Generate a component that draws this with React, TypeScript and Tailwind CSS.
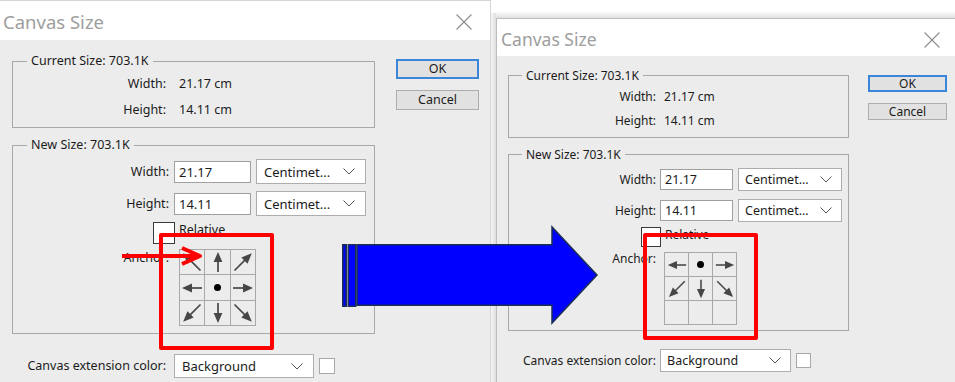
import React from "react";

type Dir = "n" | "ne" | "e" | "se" | "s" | "sw" | "w" | "nw" | "dot" | "";

const angles: Record<string, number> = {
  e: 0,
  se: 45,
  s: 90,
  sw: 135,
  w: 180,
  nw: 225,
  n: 270,
  ne: 315,
};

// one cell of the anchor grid: arrow, dot or empty
const AnchorCell = ({ d, size }: { d: Dir; size: number }) => {
  const diag = d.length === 2;
  return (
    <div className="flex items-center justify-center bg-[#ececec]">
      {d === "dot" ? (
        <div className="h-[7px] w-[7px] rounded-full bg-black" />
      ) : d ? (
        <svg width={size} height={size} viewBox="0 0 24 24" className="overflow-visible">
          <g transform={`rotate(${angles[d]} 12 12)`}>
            <line
              x1={diag ? 0 : 2}
              y1="12"
              x2={diag ? 15 : 13}
              y2="12"
              stroke="#474747"
              strokeWidth="1.7"
            />
            <polygon
              points={diag ? "14,7.6 24.5,12 14,16.4" : "12,7.6 22,12 12,16.4"}
              fill="#474747"
            />
          </g>
        </svg>
      ) : null}
    </div>
  );
};

const Chevron = () => (
  <svg width="12" height="7" viewBox="0 0 12 7">
    <polyline points="0.5,0.5 6,6 11.5,0.5" fill="none" stroke="#555" strokeWidth="1" />
  </svg>
);

const CloseX = () => (
  <svg width="16" height="16" viewBox="0 0 16 16">
    <line x1="0.5" y1="0.5" x2="15.5" y2="15.5" stroke="#8c8c8c" strokeWidth="1.1" />
    <line x1="15.5" y1="0.5" x2="0.5" y2="15.5" stroke="#8c8c8c" strokeWidth="1.1" />
  </svg>
);

const LeftDialog = () => {
  const cells: Dir[] = ["nw", "n", "ne", "w", "dot", "e", "sw", "s", "se"];
  return (
    <div className="flex h-[382px] w-[491px] shrink-0 flex-col border-t border-r border-[#d6d6d6] text-[12.5px] leading-[18px]">
      {/* title bar */}
      <div className="flex h-[39px] items-center justify-between bg-white pl-[3px] pr-[18px] pt-[2px]">
        <span className="text-[18.5px] text-[#9e9e9e]">Canvas Size</span>
        <CloseX />
      </div>

      <div className="flex flex-1 flex-col bg-[#ececec]">
        <div className="flex pl-[12px] pt-[13px]">
          <div className="flex w-[363px] flex-col">
            <fieldset className="h-[75px] border border-[#a8a8a8]">
              <legend className="ml-[14px] px-[4px] leading-[16px]">Current Size: 703.1K</legend>
              <div className="mt-[6px] flex h-[18px] items-center">
                <span className="w-[153px] text-right">Width:</span>
                <span className="ml-[13px]">21.17 cm</span>
              </div>
              <div className="mt-[8px] flex h-[18px] items-center">
                <span className="w-[153px] text-right">Height:</span>
                <span className="ml-[13px]">14.11 cm</span>
              </div>
            </fieldset>

            <fieldset className="mt-[9px] h-[197px] border border-[#a8a8a8]">
              <legend className="ml-[14px] px-[4px] leading-[16px]">New Size: 703.1K</legend>
              <div className="mt-[6px] flex h-[25px] items-center">
                <span className="w-[156px] text-right">Width:</span>
                <div className="ml-[5px] flex h-[22px] w-[77px] items-center border border-[#a0a0a0] bg-white pl-[4px] text-[13px]">
                  21.17
                </div>
                <div className="ml-[5px] flex h-[25px] w-[110px] items-center justify-between border border-[#adadad] bg-white pl-[7px] pr-[10px] text-[13px]">
                  Centimet...
                  <Chevron />
                </div>
              </div>
              <div className="mt-[7px] flex h-[25px] items-center">
                <span className="w-[156px] text-right">Height:</span>
                <div className="ml-[5px] flex h-[22px] w-[77px] items-center border border-[#a0a0a0] bg-white pl-[4px] text-[13px]">
                  14.11
                </div>
                <div className="ml-[5px] flex h-[25px] w-[110px] items-center justify-between border border-[#adadad] bg-white pl-[7px] pr-[10px] text-[13px]">
                  Centimet...
                  <Chevron />
                </div>
              </div>
              <div className="mt-[6px] flex items-start">
                <div className="ml-[140px] h-[22px] w-[22px] border border-[#3a3a3a] bg-white" />
                <span className="ml-[4px] leading-[16px]">Relative</span>
              </div>
              <div className="mt-[5px] flex items-start">
                <span className="w-[156px] text-right">Anchor:</span>
                <div className="ml-[10px] grid grid-cols-[24px_25px_24px] grid-rows-[24px_25px_24px] gap-px border border-[#a9a9a9] bg-[#a9a9a9]">
                  {cells.map((c, i) => (
                    <AnchorCell key={i} d={c} size={24} />
                  ))}
                </div>
              </div>
            </fieldset>
          </div>

          <div className="ml-[21px] mt-[6px] flex flex-col">
            <button className="h-[20px] w-[83px] border-2 border-[#3c86d9] bg-[#e1e1e1] leading-[16px]">OK</button>
            <button className="mt-[11px] h-[20px] w-[83px] border border-[#adadad] bg-[#e1e1e1] leading-[18px]">
              Cancel
            </button>
          </div>
        </div>

        <div className="mt-[20px] flex h-[24px] items-center">
          <span className="w-[166px] text-right">Canvas extension color:</span>
          <div className="ml-[8px] flex h-[24px] w-[140px] items-center justify-between border border-[#adadad] bg-white pl-[7px] pr-[10px] text-[13px]">
            Background
            <Chevron />
          </div>
          <div className="ml-[5px] h-[16px] w-[16px] border border-[#a8a8a8] bg-white" />
        </div>
      </div>
    </div>
  );
};

const RightDialog = () => {
  const cells: Dir[] = ["w", "dot", "e", "sw", "s", "se", "", "", ""];
  return (
    <div className="flex flex-1 flex-col">
      <div className="h-[18px] bg-gradient-to-b from-white from-60% to-[#e2e2e2]" />
      <div className="flex flex-1 flex-col border-l border-t border-[#bdbdbd] text-[12px] leading-[17px]">
        {/* title bar */}
        <div className="flex h-[37px] items-center justify-between bg-white pl-[4px] pr-[15px] pt-[4px]">
          <span className="text-[17.5px] text-[#9e9e9e]">Canvas Size</span>
          <CloseX />
        </div>

        <div className="flex flex-1 flex-col bg-[#ececec]">
          <div className="flex pl-[11px] pt-[12px]">
            <div className="flex w-[341px] flex-col">
              <fieldset className="h-[70px] border border-[#a8a8a8]">
                <legend className="ml-[13px] px-[4px] leading-[15px]">Current Size: 703.1K</legend>
                <div className="mt-[5px] flex h-[17px] items-center">
                  <span className="w-[147px] text-right">Width:</span>
                  <span className="ml-[8px]">21.17 cm</span>
                </div>
                <div className="mt-[7px] flex h-[17px] items-center">
                  <span className="w-[147px] text-right">Height:</span>
                  <span className="ml-[8px]">14.11 cm</span>
                </div>
              </fieldset>

              <fieldset className="mt-[9px] h-[184px] border border-[#a8a8a8]">
                <legend className="ml-[13px] px-[4px] leading-[15px]">New Size: 703.1K</legend>
                <div className="mt-[6px] flex h-[23px] items-center">
                  <span className="w-[147px] text-right">Width:</span>
                  <div className="ml-[4px] flex h-[21px] w-[73px] items-center border border-[#a0a0a0] bg-white pl-[4px] text-[12.5px]">
                    21.17
                  </div>
                  <div className="ml-[5px] flex h-[23px] w-[104px] items-center justify-between border border-[#adadad] bg-white pl-[6px] pr-[9px] text-[12.5px]">
                    Centimet...
                    <Chevron />
                  </div>
                </div>
                <div className="mt-[8px] flex h-[23px] items-center">
                  <span className="w-[147px] text-right">Height:</span>
                  <div className="ml-[4px] flex h-[21px] w-[73px] items-center border border-[#a0a0a0] bg-white pl-[4px] text-[12.5px]">
                    14.11
                  </div>
                  <div className="ml-[5px] flex h-[23px] w-[104px] items-center justify-between border border-[#adadad] bg-white pl-[6px] pr-[9px] text-[12.5px]">
                    Centimet...
                    <Chevron />
                  </div>
                </div>
                <div className="mt-[5px] flex items-start">
                  <div className="ml-[132px] h-[20px] w-[20px] border border-[#3a3a3a] bg-white" />
                  <span className="ml-[4px] leading-[15px]">Relative</span>
                </div>
                <div className="mt-[5px] flex items-start">
                  <span className="w-[147px] text-right leading-[14px]">Anchor:</span>
                  <div className="ml-[8px] grid grid-cols-[23px_23px_23px] grid-rows-[23px_23px_23px] gap-px border border-[#a9a9a9] bg-[#a9a9a9]">
                    {cells.map((c, i) => (
                      <AnchorCell key={i} d={c} size={22} />
                    ))}
                  </div>
                </div>
              </fieldset>
            </div>

            <div className="ml-[19px] mt-[7px] flex flex-col">
              <button className="h-[17px] w-[79px] border-2 border-[#3c86d9] bg-[#e1e1e1] leading-[13px]">OK</button>
              <button className="mt-[11px] h-[17px] w-[79px] border border-[#adadad] bg-[#e1e1e1] leading-[15px]">
                Cancel
              </button>
            </div>
          </div>

          <div className="mt-[18px] flex h-[23px] items-center">
            <span className="w-[159px] text-right">Canvas extension color:</span>
            <div className="ml-[4px] flex h-[23px] w-[131px] items-center justify-between border border-[#adadad] bg-white pl-[6px] pr-[9px] text-[12.5px]">
              Background
              <Chevron />
            </div>
            <div className="ml-[5px] h-[15px] w-[15px] border border-[#a8a8a8] bg-white" />
          </div>
        </div>
      </div>
    </div>
  );
};

export default function App() {
  return (
    <div className="relative flex h-[382px] w-[955px] overflow-hidden bg-white font-['Noto_Sans',sans-serif] text-[#1b1b1b]">
      <LeftDialog />
      <div className="flex w-[5px] flex-col">
        <div className="h-[13px] bg-white" />
        <div className="flex-1 bg-gradient-to-r from-[#f6f6f6] to-[#dedede]" />
      </div>
      <RightDialog />

      {/* red highlight boxes */}
      <div className="absolute left-[159px] top-[233px] h-[117px] w-[115px] rounded-[2px] border-4 border-[#ff0000]" />
      <div className="absolute left-[643px] top-[233px] h-[107px] w-[115px] rounded-[2px] border-4 border-[#ff0000]" />

      {/* red pointer arrow */}
      <svg className="absolute left-[120px] top-[244px]" width="86" height="24" viewBox="0 0 86 24">
        <line x1="2" y1="12" x2="79" y2="12" stroke="#ff0000" strokeWidth="4" />
        <polyline points="62,4 80,12 62,20" fill="none" stroke="#ff0000" strokeWidth="4" strokeLinejoin="round" />
      </svg>

      {/* blue block arrow */}
      <svg className="absolute left-[340px] top-[224px]" width="260" height="102" viewBox="0 0 260 102">
        <rect x="2.75" y="20.75" width="3.5" height="61.5" fill="#0000ff" stroke="#1b2f55" strokeWidth="1.5" />
        <rect x="8.25" y="20.75" width="7.5" height="61.5" fill="#0000ff" stroke="#1b2f55" strokeWidth="1.5" />
        <polygon
          points="17,20.75 212,20.75 212,3 257,51 212,99 212,81.25 17,81.25"
          fill="#0000ff"
          stroke="#1b2f55"
          strokeWidth="1.5"
          strokeLinejoin="miter"
        />
      </svg>
    </div>
  );
}
